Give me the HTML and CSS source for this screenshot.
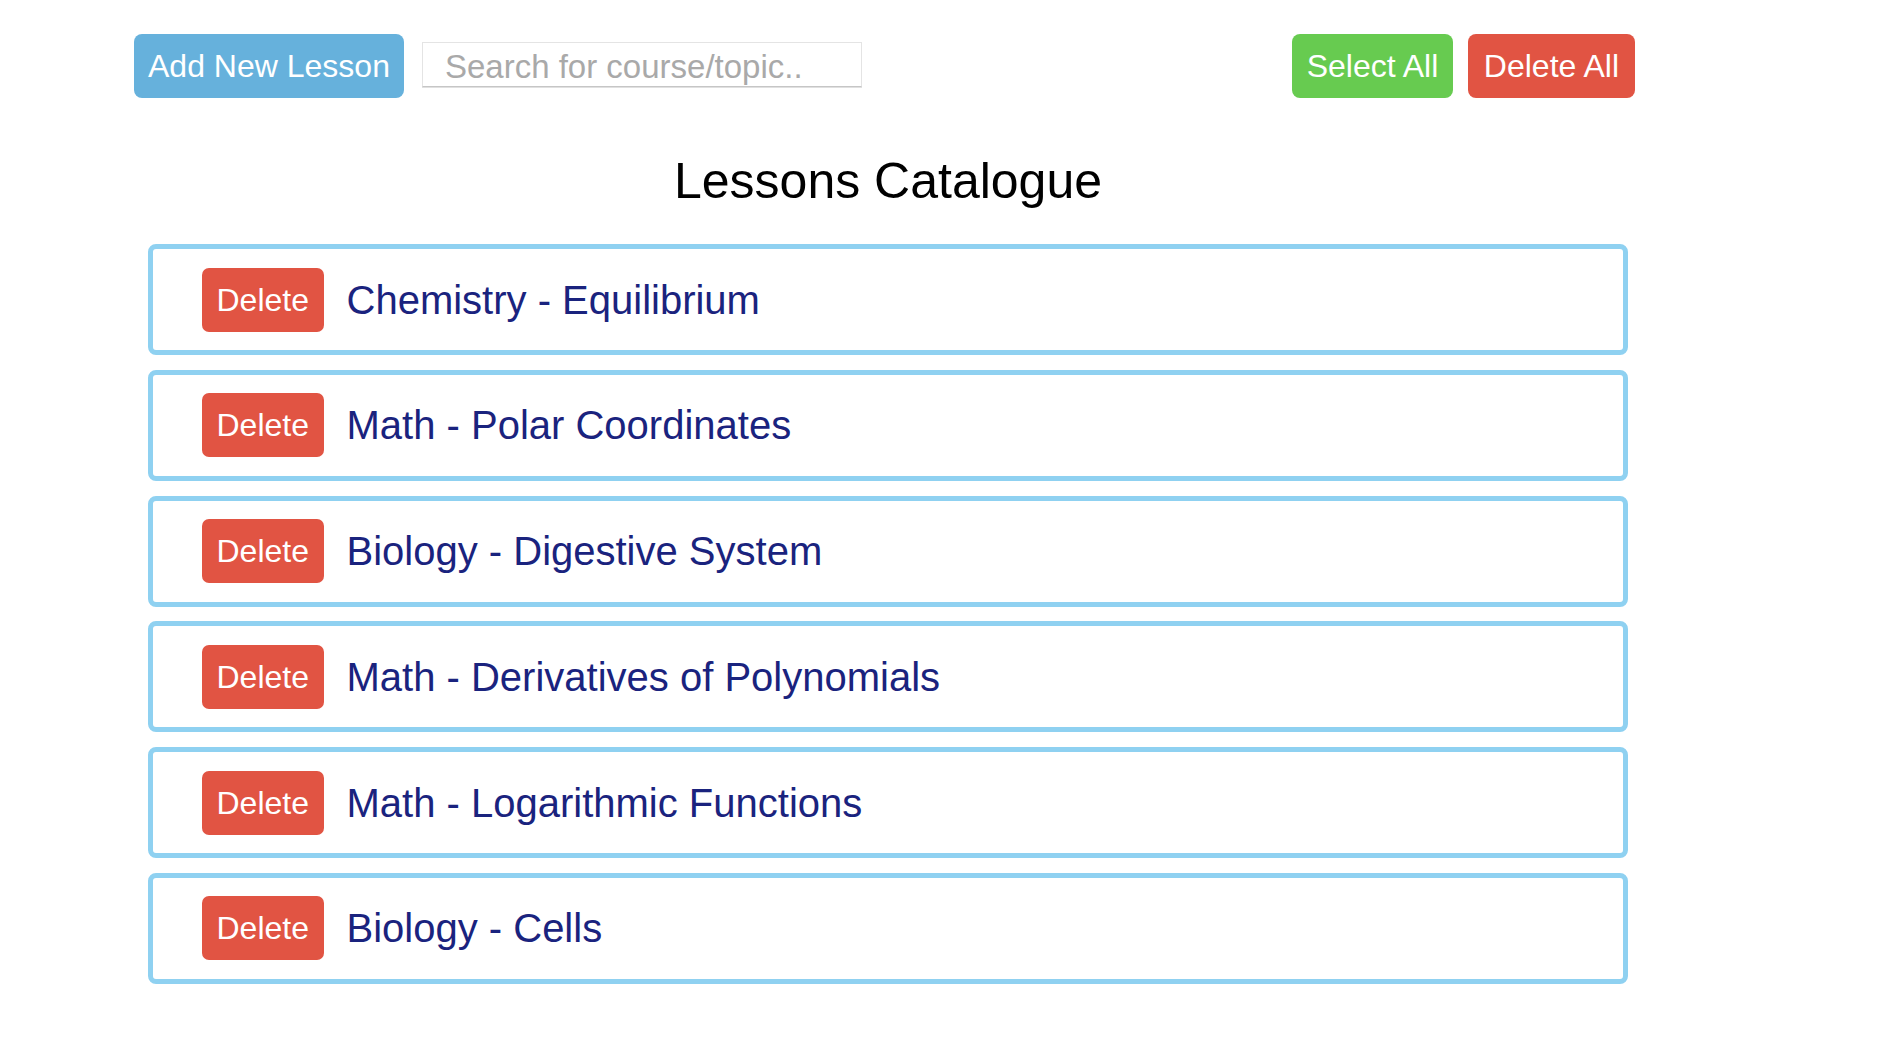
FILE: index.html
```html
<!DOCTYPE html>
<html lang="en">
<head>
<meta charset="utf-8">
<title>Lessons Catalogue</title>
<link rel="stylesheet" href="styles.css">
</head>
<body>
<div class="page">
  <div class="toolbar">
    <div class="toolbar-left">
      <button class="btn btn-blue">Add New Lesson</button>
      <input class="search" type="text" placeholder="Search for course/topic..">
    </div>
    <div class="toolbar-right">
      <button class="btn btn-green">Select All</button>
      <button class="btn btn-red btn-wide">Delete All</button>
    </div>
  </div>
  <div class="catalogue">
    <h1 class="title">Lessons Catalogue</h1>
    <ul class="lessons">
      <li class="lesson"><button class="btn btn-red">Delete</button><span class="lesson-name">Chemistry - Equilibrium</span></li>
      <li class="lesson"><button class="btn btn-red">Delete</button><span class="lesson-name">Math - Polar Coordinates</span></li>
      <li class="lesson"><button class="btn btn-red">Delete</button><span class="lesson-name">Biology - Digestive System</span></li>
      <li class="lesson"><button class="btn btn-red">Delete</button><span class="lesson-name">Math - Derivatives of Polynomials</span></li>
      <li class="lesson"><button class="btn btn-red">Delete</button><span class="lesson-name">Math - Logarithmic Functions</span></li>
      <li class="lesson"><button class="btn btn-red">Delete</button><span class="lesson-name">Biology - Cells</span></li>
    </ul>
  </div>
</div>
</body>
</html>
```

FILE: styles.css
```css
html, body {
  margin: 0;
  padding: 0;
  background: #ffffff;
}

body {
  font-family: "Liberation Sans", Arial, Helvetica, sans-serif;
}

.page {
  padding: 34px 0 0 134px;
  width: 1501px;
}

.toolbar {
  display: flex;
  justify-content: space-between;
  align-items: flex-start;
  width: 1501px;
}

.toolbar-left {
  display: flex;
  align-items: flex-start;
  gap: 18px;
}

.toolbar-right {
  display: flex;
  gap: 14.5px;
}

.btn {
  font-family: "Liberation Sans", Arial, Helvetica, sans-serif;
  font-size: 32px;
  line-height: 36px;
  padding: 14px 15px;
  color: #ffffff;
  border: none;
  border-radius: 8px;
  margin: 0;
  cursor: pointer;
  white-space: nowrap;
}

.btn-blue {
  background: #66b1dc;
  padding-left: 14px;
  padding-right: 14px;
}

.btn-green {
  background: #67cb50;
}

.btn-red {
  background: #e15443;
}

.btn-wide {
  padding-left: 16px;
  padding-right: 16px;
}

.search {
  box-sizing: border-box;
  margin-top: 8px;
  width: 440px;
  height: 45px;
  padding: 4px 22px 0;
  font-family: "Liberation Sans", Arial, Helvetica, sans-serif;
  font-size: 33px;
  color: #333333;
  border: 1px solid #e4e4e4;
  border-bottom-color: #c6c6c6;
  box-shadow: 0 1px 0 #e0e0e0;
  outline: none;
}

.search::placeholder {
  color: #a9a9a9;
}

.catalogue {
  margin-left: 14px;
  width: 1480px;
}

.title {
  margin: 55px 0 35px;
  font-size: 50px;
  line-height: 56px;
  font-weight: normal;
  text-align: center;
  color: #000000;
}

.lessons {
  list-style: none;
  margin: 0;
  padding: 0;
  display: flex;
  flex-direction: column;
  gap: 14.75px;
}

.lesson {
  box-sizing: border-box;
  height: 111px;
  border: 5px solid #8fd1f1;
  border-radius: 8px;
  display: flex;
  align-items: center;
  padding-left: 49px;
  gap: 23px;
}

.lesson .btn {
  border-radius: 7px;
  padding-left: 14.5px;
  padding-right: 14.5px;
}

.lesson-name {
  font-size: 40px;
  line-height: 46px;
  color: #1a237e;
}
```
